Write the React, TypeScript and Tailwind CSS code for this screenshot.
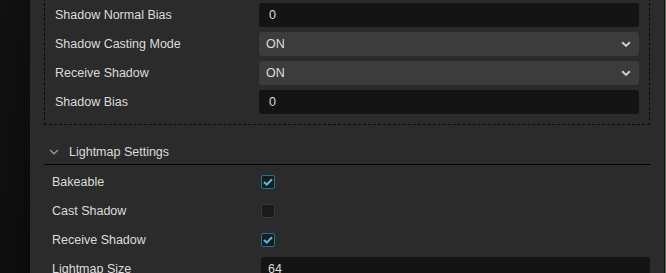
import React from "react";

const font = { fontFamily: '"Liberation Sans", Arial, sans-serif' };

function Chevron() {
  return (
    <svg width="10" height="7" viewBox="0 0 10 7" className="shrink-0">
      <path d="M1.2 1.3 L5 5 L8.8 1.3" fill="none" stroke="#d0d0d0" strokeWidth="1.9" />
    </svg>
  );
}

function InputRow({ label, value }: { label: string; value: string }) {
  return (
    <div className="flex h-[24px] shrink-0 items-center">
      <div className="w-[204px] shrink-0 text-[12.5px] text-[#dcdcdc]">{label}</div>
      <div className="flex h-[24px] flex-1 items-center rounded-[3px] bg-[#141414] pl-[10px] text-[12.5px] text-[#dcdcdc]">
        {value}
      </div>
    </div>
  );
}

function SelectRow({ label, value }: { label: string; value: string }) {
  return (
    <div className="flex h-[24px] shrink-0 items-center">
      <div className="w-[204px] shrink-0 text-[12.5px] text-[#dcdcdc]">{label}</div>
      <div className="flex h-[24px] flex-1 items-center justify-between rounded-[3px] bg-[#3c3c3c] pl-[7px] pr-[8px] text-[12.5px] text-[#dcdcdc]">
        <span>{value}</span>
        <Chevron />
      </div>
    </div>
  );
}

function CheckRow({ label, checked }: { label: string; checked: boolean }) {
  return (
    <div className="flex h-[24px] shrink-0 items-center">
      <div className="w-[209px] shrink-0 text-[12.5px] text-[#dcdcdc]">{label}</div>
      {checked ? (
        <div className="flex h-[14px] w-[14px] items-center justify-center rounded-[2px] border border-[#1d7493] bg-[#1b1b1b]">
          <svg width="10" height="8" viewBox="0 0 10 8">
            <path d="M1 4 L3.8 6.6 L9 1.3" fill="none" stroke="#4cc2ea" strokeWidth="2" />
          </svg>
        </div>
      ) : (
        <div className="h-[14px] w-[14px] rounded-[2px] border border-[#3a3a3a] bg-[#1a1a1a]" />
      )}
    </div>
  );
}

export default function App() {
  return (
    <div className="flex h-[273px] w-[666px] overflow-hidden bg-[#0d0c0c]" style={font}>
      <div className="h-full w-[30px] shrink-0 bg-gradient-to-br from-[#121111] via-[#0f0e0e] to-[#0b0b0b]" />
      <div className="flex h-full flex-1 flex-col overflow-hidden border-r border-[#121212] bg-[#2b2b2b] pl-[14px] pr-[14px]">
        <div className="-mt-[7px] flex shrink-0 flex-col gap-[5px] border border-dashed border-[#0a0a0a] border-t-0 p-[10px]">
          <InputRow label="Shadow Normal Bias" value="0" />
          <SelectRow label="Shadow Casting Mode" value="ON" />
          <SelectRow label="Receive Shadow" value="ON" />
          <InputRow label="Shadow Bias" value="0" />
        </div>
        <div className="flex h-[40px] shrink-0 items-end border-b border-black">
          <div className="flex h-[24px] items-center">
            <svg width="10" height="6" viewBox="0 0 10 6" className="ml-[5px] mr-[10px]">
              <path d="M1 1 L5 4.8 L9 1" fill="none" stroke="#9a9a9a" strokeWidth="1.3" />
            </svg>
            <span className="text-[12.5px] text-[#dcdcdc]">Lightmap Settings</span>
          </div>
        </div>
        <div className="flex shrink-0 flex-col gap-[5px] pl-[8px] pt-[5px]">
          <CheckRow label="Bakeable" checked />
          <CheckRow label="Cast Shadow" checked={false} />
          <CheckRow label="Receive Shadow" checked />
          <div className="flex h-[24px] shrink-0 items-center">
            <div className="w-[209px] shrink-0 text-[12.5px] text-[#dcdcdc]">Lightmap Size</div>
            <div className="flex h-[24px] flex-1 items-center rounded-[3px] bg-[#141414] pl-[7px] text-[12.5px] text-[#dcdcdc]">
              64
            </div>
          </div>
        </div>
      </div>
      <div className="h-full w-[1px] shrink-0 bg-[#5d6f5d]" />
    </div>
  );
}
